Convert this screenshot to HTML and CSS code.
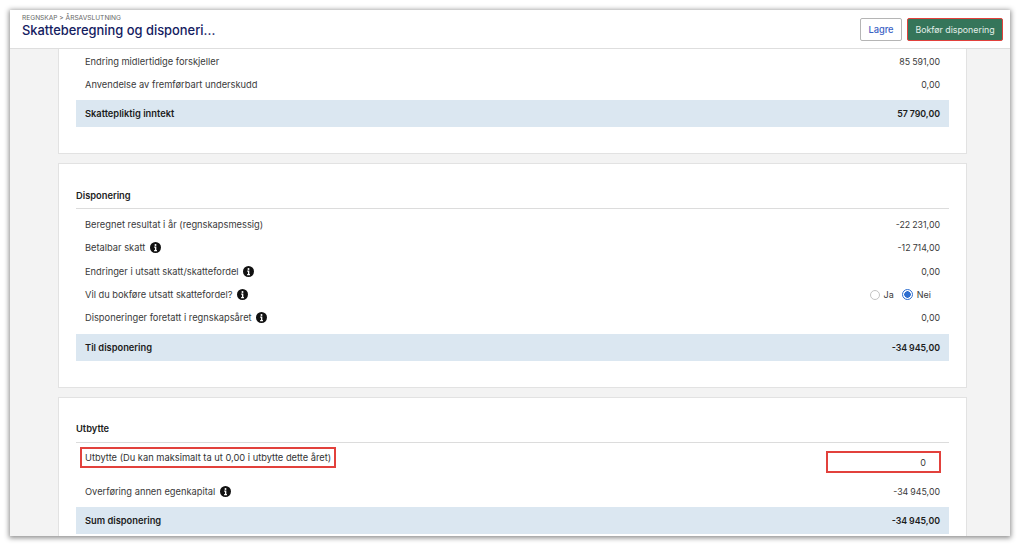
FILE: index.html
```html
<!DOCTYPE html>
<html lang="no">
<head>
<meta charset="utf-8">
<title>Skatteberegning og disponering</title>
<link rel="stylesheet" href="styles.css">
</head>
<body>
<svg class="defs" width="0" height="0" aria-hidden="true">
  <symbol id="info" viewBox="0 0 12 12">
    <circle cx="6" cy="6" r="6" fill="#111"/>
    <circle cx="6" cy="3.2" r="1.1" fill="#fff"/>
    <path d="M4.6 5h2.3v3.8h.7V10H4.500V8.800h.9V6.200h-.8z" fill="#fff"/>
  </symbol>
</svg>
<div class="window">
  <header class="topbar">
    <div class="heading">
      <div class="crumbs">REGNSKAP &gt; ÅRSAVSLUTNING</div>
      <h1 class="title">Skatteberegning og disponeri...</h1>
    </div>
    <div class="actions">
      <button class="btn btn-save">Lagre</button>
      <button class="btn btn-post">Bokfør disponering</button>
    </div>
  </header>
  <main class="content">
    <section class="card card-top">
      <div class="row"><span class="label">Endring midlertidige forskjeller</span><span class="value">85 591,00</span></div>
      <div class="row"><span class="label">Anvendelse av fremførbart underskudd</span><span class="value">0,00</span></div>
      <div class="row total"><span class="label">Skattepliktig inntekt</span><span class="value">57 790,00</span></div>
    </section>
    <section class="card card-mid">
      <h2 class="card-title">Disponering</h2>
      <div class="row"><span class="label">Beregnet resultat i år (regnskapsmessig)</span><span class="value">-22 231,00</span></div>
      <div class="row"><span class="label">Betalbar skatt <svg class="info"><use href="#info"/></svg></span><span class="value">-12 714,00</span></div>
      <div class="row"><span class="label">Endringer i utsatt skatt/skattefordel <svg class="info"><use href="#info"/></svg></span><span class="value">0,00</span></div>
      <div class="row"><span class="label">Vil du bokføre utsatt skattefordel? <svg class="info"><use href="#info"/></svg></span>
        <span class="radios">
          <span class="radio"></span><span class="radio-text">Ja</span>
          <span class="radio on"></span><span class="radio-text">Nei</span>
        </span>
      </div>
      <div class="row"><span class="label">Disponeringer foretatt i regnskapsåret <svg class="info"><use href="#info"/></svg></span><span class="value">0,00</span></div>
      <div class="row total"><span class="label">Til disponering</span><span class="value">-34 945,00</span></div>
    </section>
    <section class="card card-last">
      <h2 class="card-title">Utbytte</h2>
      <div class="row row-input"><span class="label marked">Utbytte (Du kan maksimalt ta ut 0,00 i utbytte dette året)</span><span class="input">0</span></div>
      <div class="row"><span class="label">Overføring annen egenkapital <svg class="info"><use href="#info"/></svg></span><span class="value">-34 945,00</span></div>
      <div class="row total"><span class="label">Sum disponering</span><span class="value">-34 945,00</span></div>
    </section>
  </main>
</div>
</body>
</html>
```
FILE: styles.css
```css
* { box-sizing: border-box; }
html, body { margin: 0; height: 100%; background: #fff; }
body { padding: 10px; font-family: Inter, "Liberation Sans", sans-serif; font-size: 9.3px; color: #3a3a3a; overflow: hidden; }
.defs { display: block; height: 0; }
.window { height: 526px; overflow: hidden; background: #f3f3f3; box-shadow: 0 1px 5px 1px rgba(0,0,0,.45); display: flex; flex-direction: column; }
.topbar { flex: none; height: 39px; background: #fff; border-bottom: 1px solid #dedede; display: flex; justify-content: space-between; align-items: center; padding: 0 7px 0 12px; }
.heading { margin-bottom: 6px; }
.crumbs { font-size: 6.6px; line-height: 8px; color: #666; }
.title { margin: 1px 0 0; font-size: 12.9px; line-height: 16px; font-weight: 500; color: #14205f; }
.actions { display: flex; gap: 5px; align-items: center; }
.btn { font: inherit; height: 23px; border-radius: 2px; padding: 0; }
.btn-save { width: 42px; background: #fff; border: 1px solid #b5b5b5; color: #3b62c4; font-weight: 500; }
.btn-post { width: 96px; background: #35755a; border: 1px solid #e2413c; color: #e4efe9; font-size: 8.8px; }
.content { flex: 1; min-height: 0; display: flex; flex-direction: column; gap: 9px; padding: 0 43px 0 48px; }
.card { flex: none; background: #fff; border: 1px solid #e2e2e2; padding: 0 17px; }
.card-top { border-top: 0; padding-bottom: 26px; }
.card-mid { padding-bottom: 26px; }
.card-mid .total { margin-top: 5px; }
.card-last { padding-bottom: 3px; }
.card-title { margin: 0 0 4px; padding: 25px 0 6px; font-size: 9.3px; line-height: 13px; font-weight: 600; color: #222; border-bottom: 1px solid #dcdcdc; }
.card-last .card-title { padding: 24px 0 7px; }
.row { height: 23.3px; display: flex; justify-content: space-between; align-items: center; padding: 0 9px; }
.card-top .row:first-child { height: 24px; }
.card-top .total { margin-top: 3.7px; height: 27px; }
.total { height: 27px; margin-top: 4px; background: #dbe7f1; font-weight: 600; color: #1c1c1c; }
.label { display: inline-flex; align-items: center; gap: 2px; white-space: pre; }
.value { font-size: 8.8px; word-spacing: -.4px; }
.info { width: 11px; height: 11px; flex: none; }
.radios { display: flex; align-items: center; padding-right: 9px; font-size: 9px; }
.radio { width: 10px; height: 10px; border-radius: 50%; border: 1px solid #c4c4c4; background: #fff; margin-right: 4px; }
.radio.on { width: 11px; height: 11px; border-color: #2f6fd0; background: radial-gradient(circle, #2f6fd0 0 3px, #fff 3.5px); }
.radio-text { margin-right: 8px; }
.radio-text:last-child { margin-right: 0; }
.row-input { height: 32px; padding: 0 8px 0 4px; align-items: flex-start; }
.marked { border: 2px solid #e2413c; padding: 0 3px; height: 21px; color: #333; }
.input { width: 115px; height: 22px; margin-top: 4px; border: 2px solid #e2413c; background: #fff; display: flex; align-items: center; justify-content: flex-end; padding-right: 13px; font-size: 9px; }
```
